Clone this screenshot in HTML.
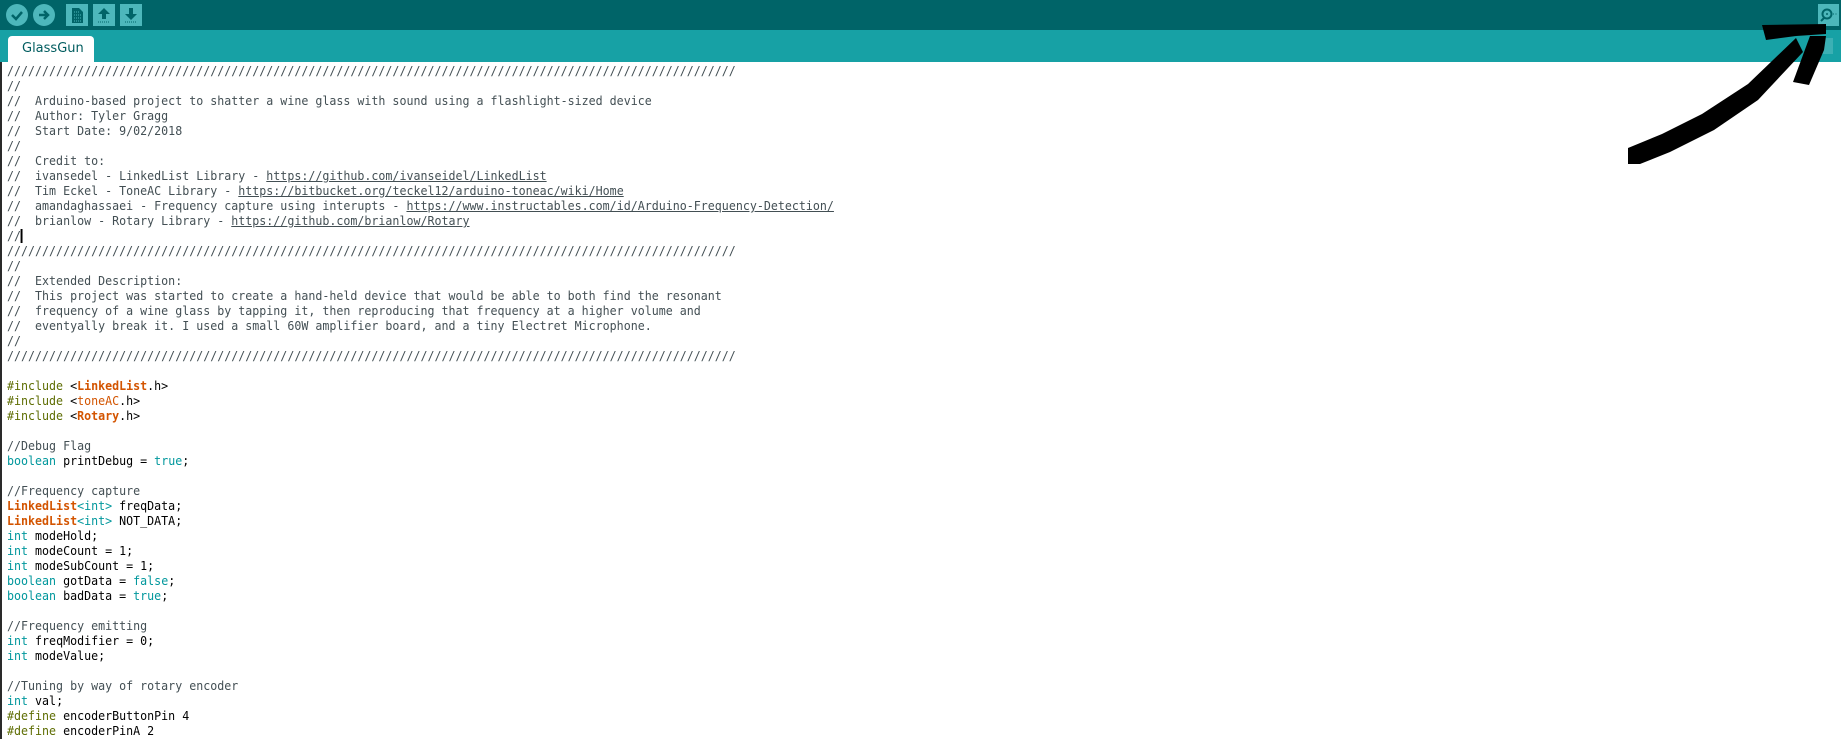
<!DOCTYPE html>
<html><head><meta charset="utf-8"><style>
*{margin:0;padding:0;box-sizing:border-box}
body{width:1841px;height:739px;overflow:hidden;background:#fff;position:relative;font-family:"DejaVu Sans Mono","Liberation Mono",monospace}
#tb{position:absolute;left:0;top:0;width:1841px;height:30px;background:#006468}
#tabs{position:absolute;left:0;top:30px;width:1841px;height:32px;background:#17a1a5}
.rb{position:absolute;top:4px;width:22px;height:22px;border-radius:50%;background:#4db7bb}
.sb{position:absolute;top:4px;width:22px;height:22px;background:#4db7bb}
#tab{position:absolute;left:8px;top:36px;width:86px;height:26px;background:#fff;border-radius:4px 4px 0 0;font-family:"DejaVu Sans","Liberation Sans",sans-serif;font-size:13px;color:#005c5f;line-height:26px;padding-left:14px}
#ed{position:absolute;left:0;top:62px;width:1841px;height:677px;border-left:2px solid #2a2a2a}
pre{position:absolute;left:5px;top:2px;font-family:"DejaVu Sans Mono","Liberation Mono",monospace;font-size:12px;line-height:15px;color:#000;white-space:pre;transform:scaleX(0.97);transform-origin:0 0}
.c{color:#434f54}.u{text-decoration:underline}.k{color:#00979c}.l{color:#d35400;font-weight:bold}.o{color:#d35400}.p{color:#5e6d03}
.cur{display:inline-block;width:2px;height:14px;background:#000;vertical-align:-3px}
</style></head><body>
<div id="tb">
<div class="rb" style="left:6px"><svg width="22" height="22"><path d="M6 11l4 4 6-7" stroke="#006468" stroke-width="2.5" fill="none"/></svg></div>
<div class="rb" style="left:33px"><svg width="22" height="22"><path d="M6 11h9M11 7l4 4-4 4" stroke="#006468" stroke-width="2.5" fill="none"/></svg></div>
<div class="sb" style="left:66px"><svg width="22" height="22"><path d="M6 4h7l4 4v11H6z" fill="#006468"/><path d="M8 8h5M8 11h7M8 14h7M8 17h7" stroke="#4db7bb" stroke-width="1" stroke-dasharray="1 1"/></svg></div>
<div class="sb" style="left:93px"><svg width="22" height="22"><path d="M11 4l6 6h-4v5H9v-5H5z" fill="#006468"/><path d="M5 18h12" stroke="#006468" stroke-dasharray="1 1"/></svg></div>
<div class="sb" style="left:120px"><svg width="22" height="22"><path d="M11 16l6-6h-4V4H9v6H5z" fill="#006468"/><path d="M5 18h12" stroke="#006468" stroke-dasharray="1 1"/></svg></div>
<div class="sb" style="left:1818px;width:21px"><svg width="21" height="22"><circle cx="9" cy="10" r="4.5" stroke="#006468" stroke-width="2" fill="none"/><circle cx="9" cy="10" r="1" fill="#006468"/><path d="M6 14l-3 3" stroke="#006468" stroke-width="2"/><path d="M15 10h4" stroke="#006468" stroke-dasharray="1 1.5"/></svg></div>
</div>
<div id="tabs"><div style="position:absolute;left:1818px;top:8px;width:15px;height:16px;background:#4db7bb;opacity:.7"></div></div>
<div id="tab">GlassGun</div>
<div id="ed"><pre><span class="c">////////////////////////////////////////////////////////////////////////////////////////////////////////
//
//  Arduino-based project to shatter a wine glass with sound using a flashlight-sized device
//  Author: Tyler Gragg
//  Start Date: 9/02/2018
//
//  Credit to:
//  ivansedel - LinkedList Library - <span class="u">https://github.com/ivanseidel/LinkedList</span>
//  Tim Eckel - ToneAC Library - <span class="u">https://bitbucket.org/teckel12/arduino-toneac/wiki/Home</span>
//  amandaghassaei - Frequency capture using interupts - <span class="u">https://www.instructables.com/id/Arduino-Frequency-Detection/</span>
//  brianlow - Rotary Library - <span class="u">https://github.com/brianlow/Rotary</span>
//<span class="cur"></span>
////////////////////////////////////////////////////////////////////////////////////////////////////////
//
//  Extended Description:
//  This project was started to create a hand-held device that would be able to both find the resonant
//  frequency of a wine glass by tapping it, then reproducing that frequency at a higher volume and
//  eventyally break it. I used a small 60W amplifier board, and a tiny Electret Microphone.
//
////////////////////////////////////////////////////////////////////////////////////////////////////////</span>

<span class="p">#include</span> &lt;<span class="l">LinkedList</span>.h&gt;
<span class="p">#include</span> &lt;<span class="o">toneAC</span>.h&gt;
<span class="p">#include</span> &lt;<span class="l">Rotary</span>.h&gt;

<span class="c">//Debug Flag</span>
<span class="k">boolean</span> printDebug = <span class="k">true</span>;

<span class="c">//Frequency capture</span>
<span class="l">LinkedList</span><span class="k">&lt;int&gt;</span> freqData;
<span class="l">LinkedList</span><span class="k">&lt;int&gt;</span> NOT_DATA;
<span class="k">int</span> modeHold;
<span class="k">int</span> modeCount = 1;
<span class="k">int</span> modeSubCount = 1;
<span class="k">boolean</span> gotData = <span class="k">false</span>;
<span class="k">boolean</span> badData = <span class="k">true</span>;

<span class="c">//Frequency emitting</span>
<span class="k">int</span> freqModifier = 0;
<span class="k">int</span> modeValue;

<span class="c">//Tuning by way of rotary encoder</span>
<span class="k">int</span> val;
<span class="p">#define</span> encoderButtonPin 4
<span class="p">#define</span> encoderPinA 2</pre></div>
<svg style="position:absolute;left:0;top:0" width="1841" height="739">
<path d="M1628 148 L1662 134 L1702 114 L1748 84 L1796 38 L1803 52 L1758 100 L1714 130 L1670 152 L1640 164 L1628 164 Z" fill="#000"/>
<path d="M1762 25 L1826 24 L1826 34 L1796 36 L1766 40 Z" fill="#000"/>
<path d="M1810 36 L1826 36 L1824 50 L1809 85 L1793 82 Z" fill="#000"/>
</svg>
</body></html>
